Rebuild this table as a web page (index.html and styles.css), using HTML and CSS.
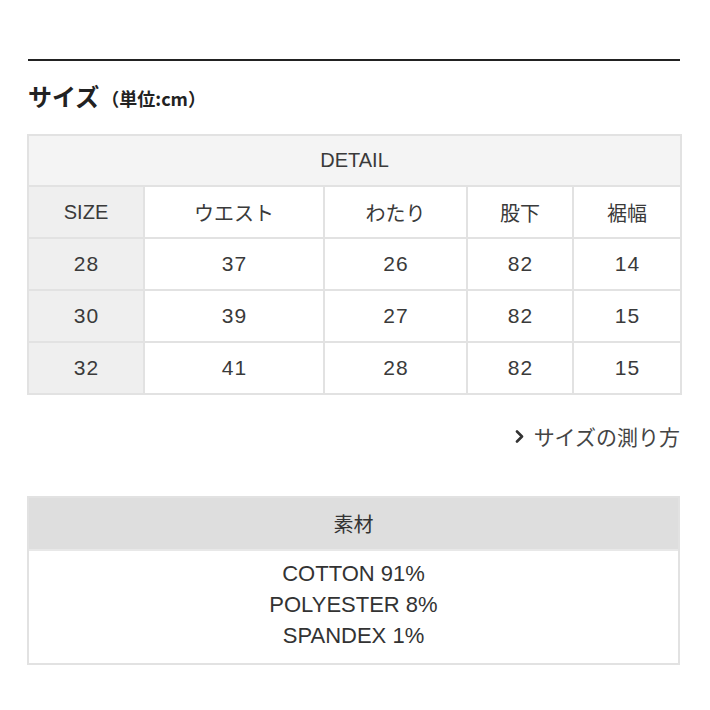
FILE: index.html
```html
<!DOCTYPE html>
<html lang="ja">
<head>
<meta charset="utf-8">
<link rel="stylesheet" href="styles.css">
</head>
<body>
<div class="page">
  <hr class="rule">
  <h2 class="title">サイズ<span class="unit">（単位:cm）</span></h2>
  <table class="size">
    <colgroup>
      <col class="c1"><col class="c2"><col class="c3"><col class="c4"><col class="c5">
    </colgroup>
    <tr><th colspan="5" class="detail">DETAIL</th></tr>
    <tr class="row"><th class="side">SIZE</th><td>ウエスト</td><td>わたり</td><td>股下</td><td>裾幅</td></tr>
    <tr class="row num"><th class="side">28</th><td>37</td><td>26</td><td>82</td><td>14</td></tr>
    <tr class="row num"><th class="side">30</th><td>39</td><td>27</td><td>82</td><td>15</td></tr>
    <tr class="row num"><th class="side">32</th><td>41</td><td>28</td><td>82</td><td>15</td></tr>
  </table>
  <div class="howto">
    <svg class="chev" width="9" height="13" viewBox="0 0 9 13" aria-hidden="true"><path d="M2 1.5 L7 6.5 L2 11.5" fill="none" stroke="#333" stroke-width="2.6" stroke-linecap="round" stroke-linejoin="round"/></svg>
    <span>サイズの測り方</span>
  </div>
  <div class="material">
    <div class="mat-head">素材</div>
    <div class="mat-body">
      <div>COTTON 91%</div>
      <div>POLYESTER 8%</div>
      <div>SPANDEX 1%</div>
    </div>
  </div>
</div>
</body>
</html>
```
FILE: styles.css
```css
html, body {
  margin: 0;
  padding: 0;
  background: #fff;
}
body {
  font-family: "Liberation Sans", "Noto Sans CJK JP", sans-serif;
  color: #333;
}
.page {
  padding: 59px 30px 0 27px;
}
.rule {
  border: 0;
  border-top: 2px solid #222;
  margin: 0 0 0 1px;
  height: 0;
}
.title {
  margin: 20px 0 0 1px;
  font-family: "Noto Sans CJK JP", sans-serif;
  font-size: 24px;
  font-weight: 700;
  line-height: 30px;
  color: #222;
}
.unit {
  font-size: 18px;
  margin-left: 2px;
}
.size {
  margin-top: 21px;
  width: 653px;
  border-collapse: collapse;
  table-layout: fixed;
  font-size: 20px;
}
.c1 { width: 116px; }
.c2 { width: 180px; }
.c3 { width: 143px; }
.c4 { width: 106px; }
.c5 { width: 108px; }
.size th, .size td {
  border: 2px solid #e2e2e2;
  height: 49px;
  padding: 0;
  text-align: center;
  font-weight: 400;
  color: #3a3a3a;
  font-family: "Liberation Sans", "Noto Sans CJK JP", sans-serif;
}
.size .row th, .size .row td {
  height: 50px;
}
.size .num th, .size .num td {
  letter-spacing: 1px;
  padding-left: 1px;
  font-size: 21px;
}
.size .detail {
  background: #f4f4f4;
}
.size .side {
  background: #efefef;
}
.howto {
  margin-top: 28px;
  display: flex;
  justify-content: flex-end;
  align-items: center;
  gap: 10px;
  font-family: "Noto Sans CJK JP", sans-serif;
  font-size: 21px;
  color: #444;
  line-height: 26px;
  margin-right: 0;
}
.chev {
  display: block;
  margin-top: 1px;
}
.material {
  margin-top: 47px;
  width: 649px;
  border: 2px solid #e2e2e2;
}
.mat-head {
  background: #dedede;
  height: 51px;
  line-height: 51px;
  text-align: center;
  font-family: "Noto Sans CJK JP", sans-serif;
  font-size: 20px;
  color: #333;
}
.mat-body {
  border-top: 2px solid #e8e8e8;
  padding: 7px 0 12px;
  text-align: center;
  font-size: 22px;
  line-height: 31px;
  color: #333;
}
```
